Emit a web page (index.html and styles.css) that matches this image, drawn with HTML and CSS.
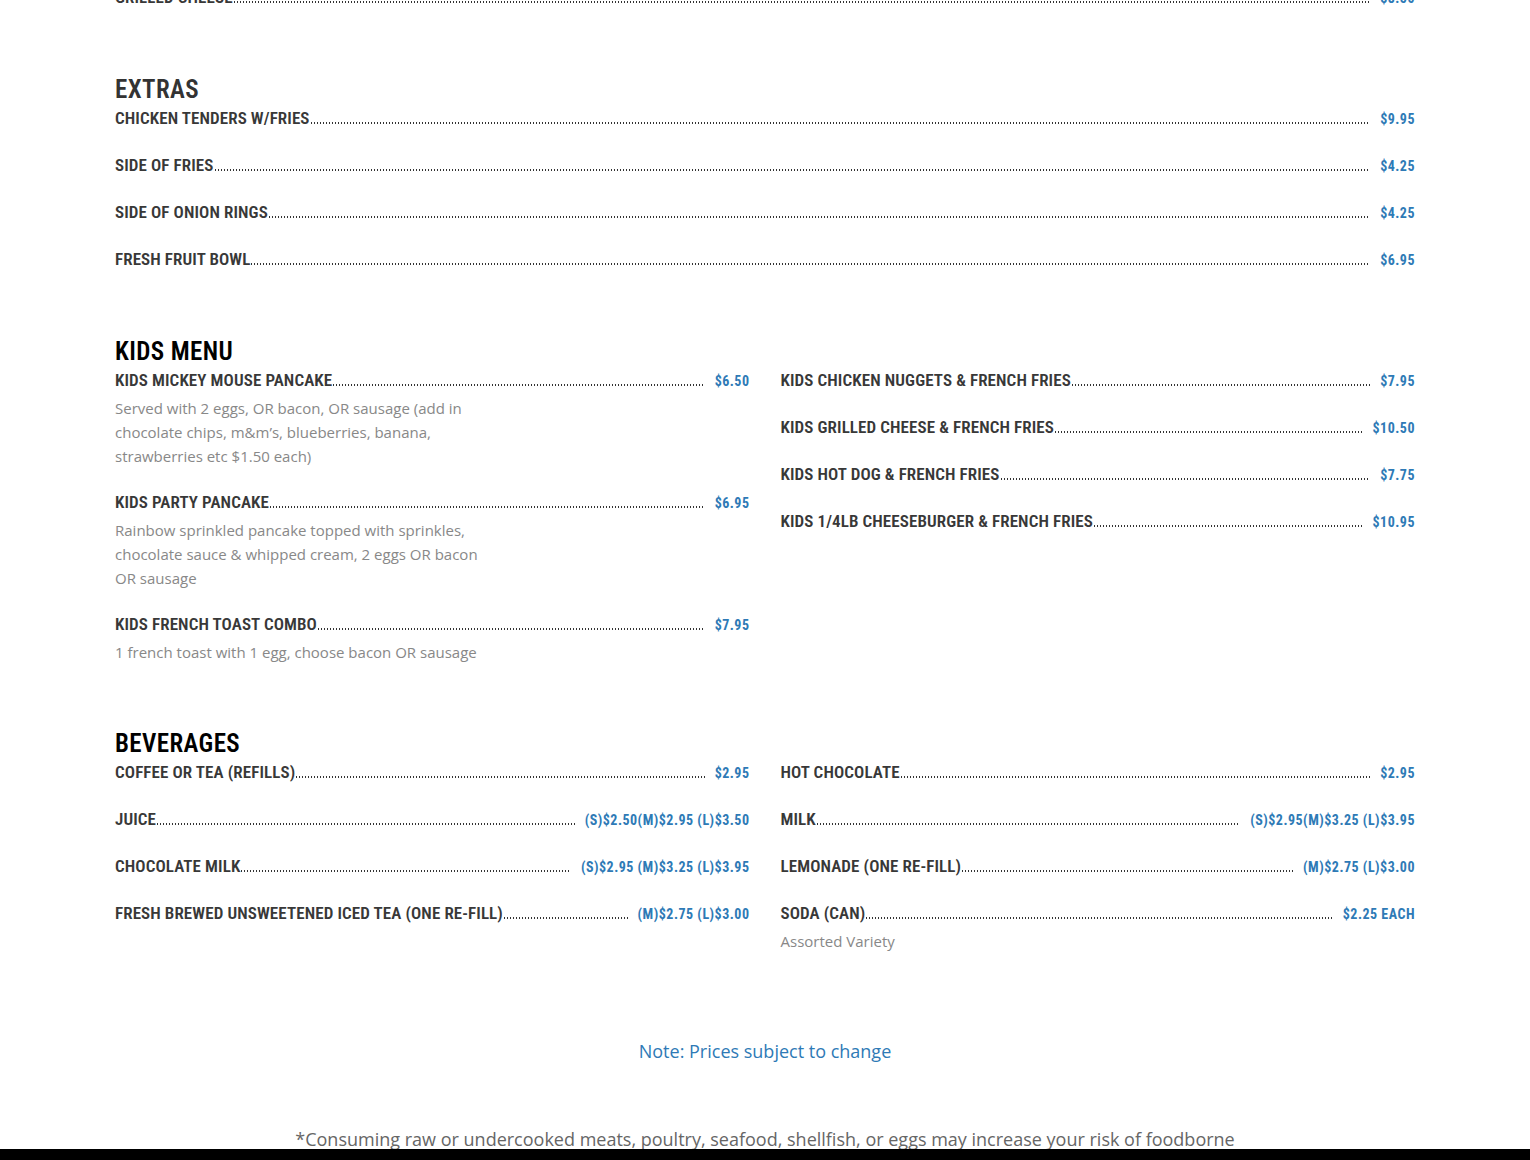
FILE: index.html
```html
<!DOCTYPE html>
<html>
<head>
<meta charset="utf-8">
<link rel="stylesheet" href="styles.css">
</head>
<body>
<main class="menu">
  <section class="section section-top">
    <div class="list list-single">
      <div class="item">
        <div class="row"><span class="name">Grilled Cheese</span><span class="leader"></span><span class="price">$8.50</span></div>
      </div>
    </div>
  </section>

  <section class="section">
    <h2 class="heading heading-grey">Extras</h2>
    <div class="list list-single">
      <div class="item"><div class="row"><span class="name">Chicken Tenders w/Fries</span><span class="leader"></span><span class="price">$9.95</span></div></div>
      <div class="item"><div class="row"><span class="name">Side of Fries</span><span class="leader"></span><span class="price">$4.25</span></div></div>
      <div class="item"><div class="row"><span class="name">Side of Onion Rings</span><span class="leader"></span><span class="price">$4.25</span></div></div>
      <div class="item"><div class="row"><span class="name">Fresh Fruit Bowl</span><span class="leader"></span><span class="price">$6.95</span></div></div>
    </div>
  </section>

  <section class="section">
    <h2 class="heading">Kids Menu</h2>
    <div class="cols">
      <div class="list">
        <div class="item">
          <div class="row"><span class="name">Kids Mickey Mouse Pancake</span><span class="leader"></span><span class="price">$6.50</span></div>
          <p class="desc">Served with 2 eggs, OR bacon, OR sausage (add in chocolate chips, m&amp;m’s, blueberries, banana, strawberries etc $1.50 each)</p>
        </div>
        <div class="item">
          <div class="row"><span class="name">Kids Party Pancake</span><span class="leader"></span><span class="price">$6.95</span></div>
          <p class="desc">Rainbow sprinkled pancake topped with sprinkles, chocolate sauce &amp; whipped cream, 2 eggs OR bacon OR sausage</p>
        </div>
        <div class="item">
          <div class="row"><span class="name">Kids French Toast Combo</span><span class="leader"></span><span class="price">$7.95</span></div>
          <p class="desc">1 french toast with 1 egg, choose bacon OR sausage</p>
        </div>
      </div>
      <div class="list">
        <div class="item"><div class="row"><span class="name">Kids Chicken Nuggets &amp; French Fries</span><span class="leader"></span><span class="price">$7.95</span></div></div>
        <div class="item"><div class="row"><span class="name">Kids Grilled Cheese &amp; French Fries</span><span class="leader"></span><span class="price">$10.50</span></div></div>
        <div class="item"><div class="row"><span class="name">Kids Hot Dog &amp; French Fries</span><span class="leader"></span><span class="price">$7.75</span></div></div>
        <div class="item"><div class="row"><span class="name">Kids 1/4lb Cheeseburger &amp; French Fries</span><span class="leader"></span><span class="price">$10.95</span></div></div>
      </div>
    </div>
  </section>

  <section class="section">
    <h2 class="heading">Beverages</h2>
    <div class="cols">
      <div class="list">
        <div class="item"><div class="row"><span class="name">Coffee or Tea (Refills)</span><span class="leader"></span><span class="price">$2.95</span></div></div>
        <div class="item"><div class="row"><span class="name">Juice</span><span class="leader"></span><span class="price">(S)$2.50(M)$2.95 (L)$3.50</span></div></div>
        <div class="item"><div class="row"><span class="name">Chocolate Milk</span><span class="leader"></span><span class="price">(S)$2.95 (M)$3.25 (L)$3.95</span></div></div>
        <div class="item"><div class="row"><span class="name">Fresh Brewed Unsweetened Iced Tea (One Re-Fill)</span><span class="leader"></span><span class="price">(M)$2.75 (L)$3.00</span></div></div>
      </div>
      <div class="list">
        <div class="item"><div class="row"><span class="name">Hot Chocolate</span><span class="leader"></span><span class="price">$2.95</span></div></div>
        <div class="item"><div class="row"><span class="name">Milk</span><span class="leader"></span><span class="price">(S)$2.95(M)$3.25 (L)$3.95</span></div></div>
        <div class="item"><div class="row"><span class="name">Lemonade (One Re-Fill)</span><span class="leader"></span><span class="price">(M)$2.75 (L)$3.00</span></div></div>
        <div class="item">
          <div class="row"><span class="name">Soda (Can)</span><span class="leader"></span><span class="price">$2.25 each</span></div>
          <p class="desc">Assorted Variety</p>
        </div>
      </div>
    </div>
  </section>

  <p class="note">Note: Prices subject to change</p>
  <p class="warning">*Consuming raw or undercooked meats, poultry, seafood, shellfish, or eggs may increase your risk of foodborne illness, especially if you have certain medical conditions.</p>
</main>
<div class="bottom-bar"></div>
</body>
</html>
```
FILE: styles.css
```css
html, body {
  margin: 0;
  padding: 0;
  background: #ffffff;
}

body {
  font-family: "Open Sans", "Liberation Sans", sans-serif;
  color: #666;
}

.menu {
  width: 1300px;
  margin: 0 auto;
}

.section {
  display: flow-root;
  margin-bottom: 48px;
}

.section-top {
  margin-top: -18px;
}

.heading {
  margin: 0;
  font-family: "Roboto Condensed", "Open Sans Condensed", "Open Sans", sans-serif;
  font-stretch: 75%;
  font-weight: 600;
  font-size: 25px;
  line-height: 26px;
  letter-spacing: 0.4px;
  text-transform: uppercase;
  color: #000;
}

.heading-grey {
  color: #333;
}

.cols {
  display: grid;
  grid-template-columns: minmax(0, 1fr) minmax(0, 1fr);
  column-gap: 31px;
  align-items: start;
}

.item {
  margin-bottom: 16px;
}

.row {
  display: flex;
  align-items: baseline;
  height: 31px;
  line-height: 31px;
}

.name {
  font-family: "Roboto Condensed", "Open Sans Condensed", "Open Sans", sans-serif;
  font-stretch: 75%;
  font-weight: 600;
  font-size: 17px;
  letter-spacing: 0.1px;
  text-transform: uppercase;
  color: #383838;
  white-space: nowrap;
}

.leader {
  flex: 1;
  height: 2px;
  margin: 0 10px 0 1px;
  background-image: linear-gradient(to right, #333 1px, transparent 1px);
  background-size: 3px 2px;
  background-repeat: repeat-x;
}

.price {
  font-family: "Roboto Condensed", "Open Sans Condensed", "Open Sans", sans-serif;
  font-stretch: 75%;
  font-weight: 700;
  font-size: 14px;
  letter-spacing: 0.5px;
  text-transform: uppercase;
  color: #2e7ab6;
  white-space: nowrap;
}

.desc {
  margin: 0;
  padding-bottom: 3px;
  max-width: 380px;
  font-size: 15px;
  line-height: 24px;
  color: #888;
}

.note {
  margin: 64px 0 0;
  text-align: center;
  font-size: 18px;
  line-height: 30px;
  color: #2e7ab6;
}

.warning {
  max-width: 960px;
  margin: 58px auto 0;
  text-align: center;
  font-size: 18px;
  line-height: 30px;
  color: #666;
}

.bottom-bar {
  position: fixed;
  left: 0;
  right: 0;
  bottom: 0;
  height: 11px;
  background: #000;
}
```
